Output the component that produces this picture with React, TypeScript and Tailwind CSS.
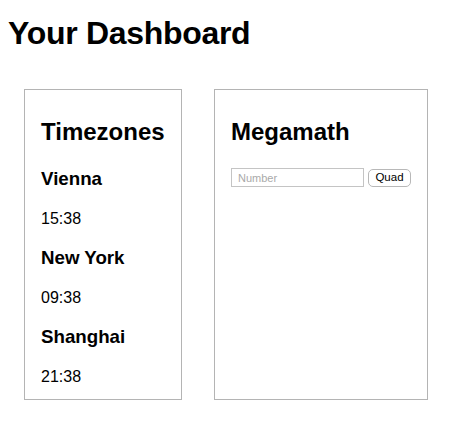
const zones = [
  { city: 'Vienna', time: '15:38' },
  { city: 'New York', time: '09:38' },
  { city: 'Shanghai', time: '21:38' },
];

function Panel({ className, children }: { className: string; children: React.ReactNode }) {
  return (
    <section className={`flex h-[311px] flex-col border border-[#b4b4b4] px-4 pt-[28px] ${className}`}>
      {children}
    </section>
  );
}

export default function App() {
  return (
    <div className="min-h-screen bg-white px-2 font-['Liberation_Sans',Arial,sans-serif] text-black">
      <h1 className="pt-[15px] text-[32px] leading-[37px] font-bold tracking-[-0.3px]">Your Dashboard</h1>

      <div className="mt-[37px] flex gap-8 pl-4">
        <Panel className="w-[158px]">
          <h2 className="text-[24px] leading-[28px] font-bold">Timezones</h2>
          <div className="mt-[22px] flex flex-col gap-[19px]">
            {zones.map((z) => (
              <div key={z.city} className="flex flex-col gap-[19px]">
                <h3 className="text-[18.72px] leading-[22px] font-bold">{z.city}</h3>
                <p className="text-[16px] leading-[19px]">{z.time}</p>
              </div>
            ))}
          </div>
        </Panel>

        <Panel className="w-[214px]">
          <h2 className="text-[24px] leading-[28px] font-bold">Megamath</h2>
          <div className="mt-[22px] flex items-start gap-[4px]">
            <input
              type="text"
              placeholder="Number"
              className="h-[19px] w-[133px] border border-[#c4c4c4] px-[6px] text-[11px] outline-none placeholder:text-[#a9a9a9]"
            />
            <button className="mt-[1px] h-[18px] w-[45px] rounded-[5px] border border-[#b8b8b8] bg-white text-[11.5px] leading-none">
              Quad
            </button>
          </div>
        </Panel>
      </div>
    </div>
  );
}
